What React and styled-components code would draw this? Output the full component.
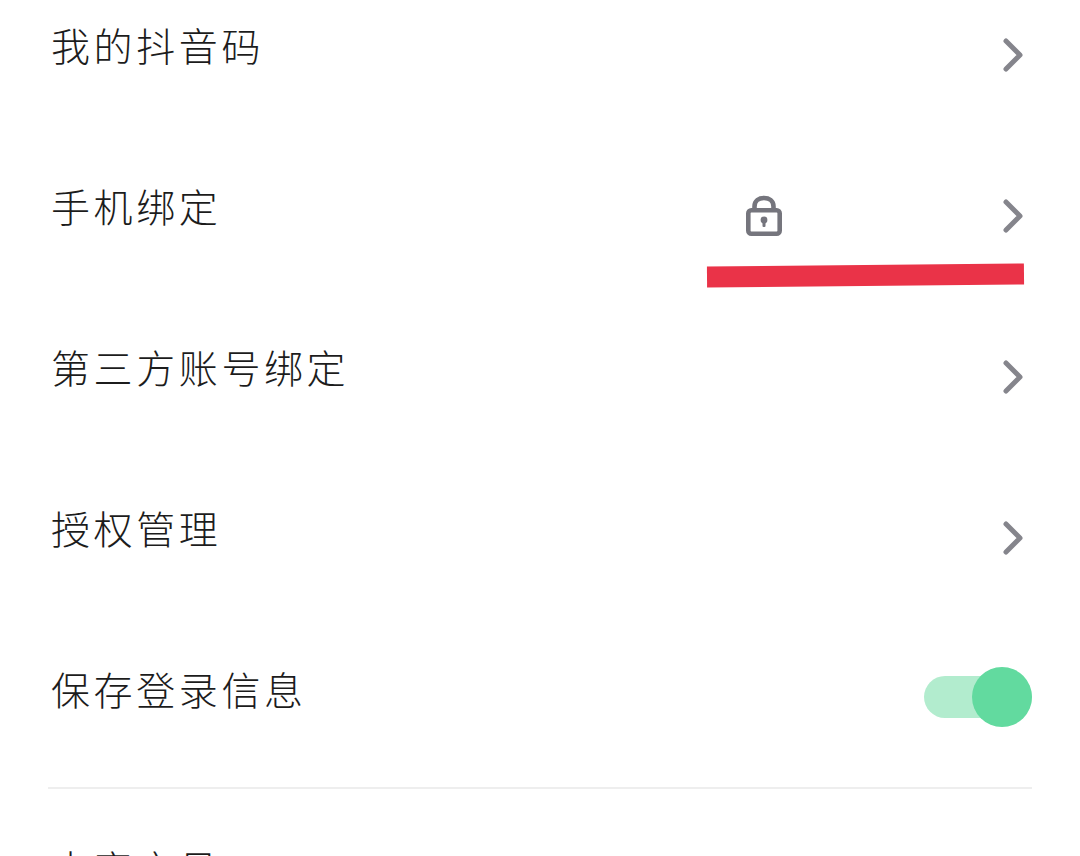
import React from "react";
import styled, { createGlobalStyle } from "styled-components";

const Global = createGlobalStyle`
  html, body { margin: 0; padding: 0; background: #fff; }
`;

const Page = styled.div`
  width: 1080px;
  height: 856px;
  overflow: hidden;
  background: #fff;
  font-family: "Noto Sans CJK SC", "Noto Sans", sans-serif;
`;

const List = styled.div`
  display: flex;
  flex-direction: column;
  margin-top: -26px;
  padding: 0 48px;
`;

const Row = styled.div`
  position: relative;
  display: flex;
  align-items: center;
  justify-content: space-between;
  height: 161px;
`;

const Label = styled.span`
  margin: 0 0 22px 3px;
  font-size: 39px;
  font-weight: 300;
  line-height: 44px;
  letter-spacing: 3.6px;
  color: #1c1c1c;
  white-space: nowrap;
`;

const Actions = styled.div`
  display: flex;
  align-items: center;
  gap: 218px;
`;

const ChevronIcon = styled.svg`
  display: block;
  width: 24px;
  height: 36px;
  margin-right: 7px;
  fill: none;
  stroke: #85858c;
  stroke-width: 5;
  stroke-linecap: round;
  stroke-linejoin: round;
`;

const LockIcon = styled.svg`
  display: block;
  width: 38px;
  height: 42px;
  color: #75757d;
`;

const RedactionBar = styled.div`
  position: absolute;
  left: 659px;
  top: 130px;
  width: 317px;
  height: 21px;
  background: #ea3348;
  transform: rotate(-0.54deg);
`;

const Toggle = styled.div`
  position: relative;
  width: 108px;
  height: 42px;
  margin-bottom: 4px;
  border-radius: 21px;
  background: #b2ecce;
`;

const Knob = styled.span`
  position: absolute;
  right: 0;
  top: -9px;
  width: 60px;
  height: 60px;
  border-radius: 50%;
  background: #62da9f;
`;

const Divider = styled.hr`
  width: 100%;
  height: 2px;
  margin: 8px 0 0;
  border: 0;
  background: #eeeeee;
`;

const Footer = styled(Row)`
  height: auto;
  align-items: flex-start;
  padding-top: 56px;
`;

const Chevron = () => (
  <ChevronIcon viewBox="0 0 24 36">
    <path d="M5 4 L19 18 L5 32" />
  </ChevronIcon>
);

const Lock = () => (
  <LockIcon viewBox="0 0 38 42">
    <path
      d="M9.5 16 V11.5 C9.5 5.5 14 3 19 3 C24 3 28.5 5.5 28.5 11.5 V16"
      fill="none"
      stroke="currentColor"
      strokeWidth="4.6"
    />
    <rect x="3.3" y="15.3" width="31.4" height="23.4" rx="3" fill="none" stroke="currentColor" strokeWidth="4.6" />
    <circle cx="19" cy="25" r="3.4" fill="currentColor" />
    <rect x="17.5" y="26" width="3" height="6" rx="1" fill="currentColor" />
  </LockIcon>
);

export default function App() {
  return (
    <Page>
      <Global />
      <List>
        <Row>
          <Label>我的抖音码</Label>
          <Chevron />
        </Row>
        <Row>
          <Label>手机绑定</Label>
          <Actions>
            <Lock />
            <Chevron />
          </Actions>
          <RedactionBar />
        </Row>
        <Row>
          <Label>第三方账号绑定</Label>
          <Chevron />
        </Row>
        <Row>
          <Label>授权管理</Label>
          <Chevron />
        </Row>
        <Row>
          <Label>保存登录信息</Label>
          <Toggle>
            <Knob />
          </Toggle>
        </Row>
        <Divider />
        <Footer>
          <Label>内容字号</Label>
        </Footer>
      </List>
    </Page>
  );
}
